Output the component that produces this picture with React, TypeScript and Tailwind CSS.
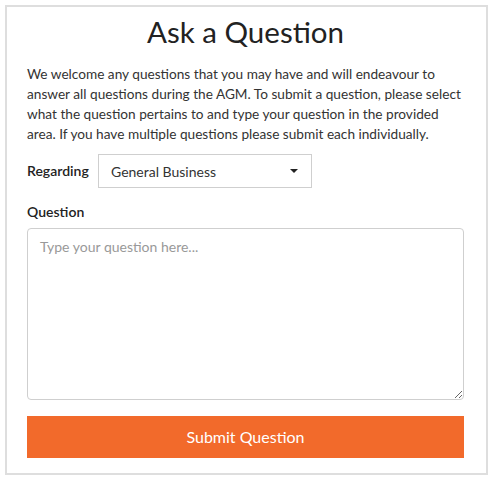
import { useState } from "react";

const intro = [
  "We welcome any questions that you may have and will endeavour to",
  "answer all questions during the AGM. To submit a question, please select",
  "what the question pertains to and type your question in the provided",
  "area. If you have multiple questions please submit each individually.",
];

export default function App() {
  const [topic, setTopic] = useState("General Business");
  const [text, setText] = useState("");

  return (
    <div className="min-h-screen bg-white pl-[5px] pt-[5px] font-['Lato','Liberation_Sans',sans-serif] text-[#333]">
      <div className="w-[483px] border-2 border-[#dedede] pl-[20px] pr-[22px] pt-[7px] pb-[15px]">
        <h1 className="text-center text-[29.5px] leading-[36px] font-normal text-[#222]">Ask a Question</h1>
        <p className="mt-[14px] text-[13.65px] leading-[20px]">
          {intro.map((line) => (
            <span key={line} className="block whitespace-nowrap">{line}</span>
          ))}
        </p>

        <div className="mt-[10px] flex items-center gap-[10px]">
          <label className="w-[61px] text-[14px] leading-[20px] font-semibold text-[#222]">Regarding</label>
          <div className="relative w-[214px]">
            <select
              value={topic}
              onChange={(e) => setTopic(e.target.value)}
              className="h-[34px] w-full appearance-none border border-[#cfcfcf] bg-white pl-[12px] pr-8 text-[14px] text-[#333] outline-none"
            >
              <option>General Business</option>
              <option>Financial Statements</option>
              <option>Remuneration</option>
              <option>Other</option>
            </select>
            <svg className="pointer-events-none absolute right-[14px] top-[15px]" width="8" height="4" viewBox="0 0 8 4">
              <path d="M0 0h8L4 4z" fill="#222" />
            </svg>
          </div>
        </div>

        <label className="mt-[14px] block text-[14px] leading-[20px] font-semibold text-[#222]">Question</label>
        <textarea
          value={text}
          onChange={(e) => setText(e.target.value)}
          placeholder="Type your question here..."
          className="mt-[6px] block h-[172px] w-full rounded-[4px] border border-[#cfcfcf] px-[12px] py-[8px] text-[14px] leading-[20px] text-[#333] outline-none placeholder:text-[#999]"
        />

        <button
          type="button"
          className="mt-[16px] block h-[42px] w-full bg-[#f26a2b] text-[16px] text-white"
        >
          Submit Question
        </button>
      </div>
    </div>
  );
}
